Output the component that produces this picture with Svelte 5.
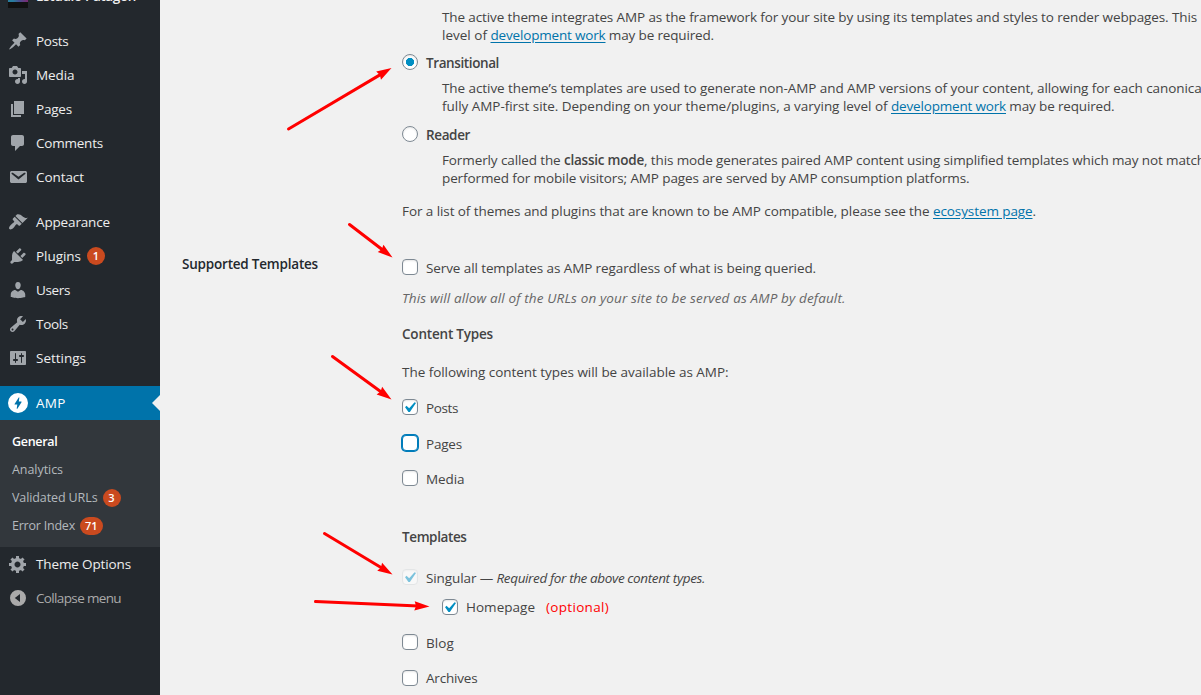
<script>
  const icons = {
    posts: 'M10.44 3.02l1.82-1.82 6.36 6.35-1.83 1.82c-1.05-.68-2.48-.57-3.41.36l-.75.75c-.92.93-1.04 2.35-.35 3.41l-1.83 1.82-2.41-2.41-2.8 2.79c-.42.42-3.38 2.71-3.8 2.29s1.86-3.39 2.28-3.81l2.79-2.79L4.1 9.36l1.83-1.82c1.05.69 2.48.57 3.4-.36l.75-.75c.93-.92 1.05-2.35.36-3.41z',
    media: 'M13 11V4c0-.55-.45-1-1-1h-1.67L9 1H5L3.67 3H2c-.55 0-1 .45-1 1v7c0 .55.45 1 1 1h10c.55 0 1-.45 1-1zM7 4.5c1.38 0 2.5 1.12 2.5 2.5S8.38 9.5 7 9.5 4.5 8.38 4.5 7 5.62 4.5 7 4.5zM14 6h5v10.5c0 1.38-1.12 2.5-2.5 2.5S14 17.88 14 16.5s1.12-2.5 2.5-2.5c.17 0 .34.02.5.05V9h-3V6zm-4 8.05V13h2v3.5c0 1.38-1.12 2.5-2.5 2.5S7 17.88 7 16.5 8.12 14 9.5 14c.17 0 .34.02.5.05z',
    pages: 'M6 15V2h10v13H6zm-1 1h8v2H3V5h2v11z',
    comments: 'M5 2h9c1.1 0 2 .9 2 2v7c0 1.1-.9 2-2 2h-2l-5 5v-5H5c-1.1 0-2-.9-2-2V4c0-1.1.9-2 2-2z',
    contact: 'M3.87 4h13.25C18.37 4 19 4.59 19 5.79v8.42c0 1.19-.63 1.79-1.88 1.79H3.87c-1.25 0-1.88-.6-1.88-1.79V5.79c0-1.2.63-1.79 1.88-1.79zm6.62 8.6l6.74-5.53c.24-.2.43-.66.13-1.07-.29-.41-.82-.42-1.17-.17l-5.7 3.86L4.8 5.83c-.35-.25-.88-.24-1.17.17-.3.41-.11.87.13 1.07z',
    appearance: 'M14.48 11.06L7.41 3.99l1.5-1.5c.5-.56 2.3-.47 3.51.32 1.21.8 1.43 1.28 2.91 2.1 1.18.64 2.45 1.26 4.45.85zm-.71.71L6.7 4.7 4.93 6.47c-.39.39-.39 1.02 0 1.41l1.06 1.06c.39.39.39 1.03 0 1.42-.6.6-1.43 1.11-2.21 1.69-.35.26-.7.53-1.01.84C1.43 14.23.4 16.08 1.4 17.07c.99 1 2.84-.03 4.18-1.36.31-.31.58-.66.85-1.02.57-.78 1.08-1.61 1.69-2.21.39-.39 1.02-.39 1.41 0l1.06 1.06c.39.39 1.02.39 1.41 0z',
    plugins: 'M13.11 4.36L9.87 7.6 8 5.73l3.24-3.24c.35-.34 1.05-.2 1.56.32.52.51.66 1.21.31 1.55zm-8 1.77l.91-1.12 9.01 9.01-1.19.84c-.71.71-2.63 1.16-3.82 1.16H6.14L4.9 17.26c-.59.59-1.54.59-2.12 0-.59-.58-.59-1.53 0-2.12l1.24-1.24v-3.88c0-1.13.4-3.19 1.09-3.89zm7.26 3.97l3.24-3.24c.34-.35 1.04-.21 1.55.31.52.51.66 1.21.31 1.55l-3.24 3.25z',
    users: 'M10 9.25c-2.27 0-2.73-3.44-2.73-3.44C7 4.02 7.82 2 9.97 2c2.16 0 2.98 2.02 2.71 3.81 0 0-.41 3.44-2.68 3.44zm0 2.57L12.72 10c2.39 0 4.52 2.33 4.52 4.53v2.49s-3.65 1.13-7.24 1.13c-3.65 0-7.24-1.13-7.24-1.13v-2.49c0-2.25 1.94-4.48 4.47-4.48z',
    tools: 'M16.68 9.77c-1.34 1.34-3.3 1.67-4.95.99l-5.41 6.52c-.99.99-2.59.99-3.58 0s-.99-2.59 0-3.57l6.52-5.42c-.68-1.65-.35-3.61.99-4.95 1.28-1.28 3.12-1.62 4.72-1.06l-2.89 2.89 2.82 2.82 2.86-2.87c.53 1.58.18 3.39-1.08 4.65zM3.81 16.21c.4.39 1.04.39 1.43 0 .4-.4.4-1.04 0-1.43-.39-.4-1.03-.4-1.43 0-.39.39-.39 1.03 0 1.43z',
    settings: 'M18 16V4c0-.55-.45-1-1-1H3c-.55 0-1 .45-1 1v12c0 .55.45 1 1 1h14c.55 0 1-.45 1-1zM8 11h1c.55 0 1 .45 1 1s-.45 1-1 1H8v1.5c0 .28-.22.5-.5.5s-.5-.22-.5-.5V13H6c-.55 0-1-.45-1-1s.45-1 1-1h1V5.5c0-.28.22-.5.5-.5s.5.22.5.5V11zm5-2h-1c-.55 0-1-.45-1-1s.45-1 1-1h1V5.5c0-.28.22-.5.5-.5s.5.22.5.5V7h1c.55 0 1 .45 1 1s-.45 1-1 1h-1v5.5c0 .28-.22.5-.5.5s-.5-.22-.5-.5V9z',
    amp: 'M10 0a10 10 0 1 0 0 20a10 10 0 0 0 0-20zM11.4 4.4L10.8 8.6H13.2Q13.8 8.6 13.5 9.2L9.4 15.8H8.7L9.3 11.6H6.9Q6.3 11.6 6.6 11L10.7 4.4z',
    options: 'M18 12h-2.18c-.17.7-.44 1.35-.81 1.93l1.54 1.54-2.1 2.1-1.54-1.54c-.58.36-1.23.63-1.91.79V19H8v-2.18c-.68-.16-1.33-.43-1.91-.79l-1.54 1.54-2.12-2.12 1.54-1.54c-.36-.58-.63-1.23-.79-1.91H1V9.03h2.17c.16-.7.44-1.35.8-1.94L2.43 5.55l2.1-2.1 1.54 1.54c.58-.37 1.24-.64 1.93-.81V2h3v2.18c.68.16 1.33.43 1.91.79l1.54-1.54 2.12 2.12-1.54 1.54c.36.59.64 1.24.8 1.94H18V12zm-8.5 1.5c1.66 0 3-1.34 3-3s-1.34-3-3-3-3 1.34-3 3 1.34 3 3 3z',
    collapse: 'M10 2a8 8 0 1 0 0 16a8 8 0 0 0 0-16zM12 6v8L6.8 10z'
  };

  const content = [
    ['posts', 'Posts', 32.5],
    ['media', 'Media', 38.5],
    ['pages', 'Pages', 36],
    ['comments', 'Comments', 67],
    ['contact', 'Contact', 48]
  ];
  const admin = [
    ['appearance', 'Appearance', 74],
    ['plugins', 'Plugins', 45, '1'],
    ['users', 'Users', 34],
    ['tools', 'Tools', 32],
    ['settings', 'Settings', 50]
  ];
  const submenu = [
    ['General', 45.5],
    ['Analytics', 51],
    ['Validated URLs', 85.5, '3'],
    ['Error Index', 63, '71']
  ];
  const arrows = [
    [288.5, 129, 391.5, 68],
    [349.5, 224.5, 392.5, 257.5],
    [332.5, 356.5, 391.5, 399.5],
    [324.5, 533.5, 392.5, 574.5],
    [315.5, 601.5, 429.5, 606.5]
  ].map(([x1, y1, x2, y2]) => ({
    x: x1,
    y: y1,
    length: Math.hypot(x2 - x1, y2 - y1),
    angle: (Math.atan2(y2 - y1, x2 - x1) * 180) / Math.PI
  }));

  // Spreads the letters of a run of text over the given width.
  function fit(node, width) {
    const natural = node.getBoundingClientRect().width;
    node.style.letterSpacing = `${(width - natural) / node.textContent.length}px`;
  }
</script>

{#snippet icon(name)}
  <svg class="icon" viewBox="0 0 20 20" aria-hidden="true"><path fill-rule="evenodd" d={icons[name]} /></svg>
{/snippet}

{#snippet item([name, label, width, count])}
  <li class="item">
    {@render icon(name)}
    <span class="run" use:fit={width}>{label}</span>
    {#if count}<span class="count">{count}</span>{/if}
  </li>
{/snippet}

{#snippet box(checked, state)}
  <span class="box {state}">
    {#if checked}
      <svg viewBox="0 0 20 20" aria-hidden="true"><path d="M14.83 4.89l1.34.94-5.81 8.38H9.02L5.78 9.67l1.34-1.25 2.57 2.4z" /></svg>
    {/if}
  </span>
{/snippet}

<div class="page">
  <nav class="sidebar">
    <div class="brand">
      <span class="logo"></span>
      <span class="run" use:fit={100}>Estudio Patagon</span>
    </div>
    <ul>{#each content as entry}{@render item(entry)}{/each}</ul>
    <ul>{#each admin as entry}{@render item(entry)}{/each}</ul>
    <ul>
      <li class="item current">{@render icon('amp')}<span class="run" use:fit={29.5}>AMP</span></li>
      <li>
        <ul class="submenu">
          {#each submenu as [label, width, count], i}
            <li class:active={i === 0}>
              <span class="run" use:fit={width}>{label}</span>
              {#if count}<span class="count">{count}</span>{/if}
            </li>
          {/each}
        </ul>
      </li>
      {@render item(['options', 'Theme Options', 95])}
      <li class="item collapse">{@render icon('collapse')}<span class="run" use:fit={85}>Collapse menu</span></li>
    </ul>
  </nav>

  <main>
    <section>
      <div class="field">
        <p class="indent">
          <span class="run" use:fit={755}>The active theme integrates AMP as the framework for your site by using its templates and styles to render webpages. This</span><br />
          <span class="run" use:fit={48.5}>{'level of '}</span><a class="run" href="#work" use:fit={115}>development work</a><span class="run" use:fit={108.5}>{' may be required.'}</span>
        </p>
        <div class="option gap-10"><span class="radio on"></span><strong class="run" use:fit={73}>Transitional</strong></div>
        <p class="indent gap-7">
          <span class="run" use:fit={763}>The active theme’s templates are used to generate non-AMP and AMP versions of your content, allowing for each canonical</span><br />
          <span class="run" use:fit={449}>{'fully AMP-first site. Depending on your theme/plugins, a varying level of '}</span><a class="run" href="#work" use:fit={115}>development work</a><span class="run" use:fit={108.5}>{' may be required.'}</span>
        </p>
        <div class="option gap-11"><span class="radio"></span><strong class="run" use:fit={44}>Reader</strong></div>
        <p class="indent gap-7">
          <span class="run" use:fit={122}>{'Formerly called the '}</span><strong class="run" use:fit={80}>classic mode</strong><span class="run" use:fit={561}>, this mode generates paired AMP content using simplified templates which may not match</span><br />
          <span class="run" use:fit={527.5}>performed for mobile visitors; AMP pages are served by AMP consumption platforms.</span>
        </p>
        <p class="gap-15">
          <span class="run" use:fit={531}>{'For a list of themes and plugins that are known to be AMP compatible, please see the '}</span><a class="run" href="#ecosystem" use:fit={99.5}>ecosystem page</a>.
        </p>
      </div>
    </section>

    <section class="templates">
      <h2><span class="run" use:fit={136}>Supported Templates</span></h2>
      <div class="field">
        <label class="option">{@render box(false, '')}<span class="run" use:fit={390}>Serve all templates as AMP regardless of what is being queried.</span></label>
        <p class="hint gap-12"><em class="run" use:fit={443.5}>This will allow all of the URLs on your site to be served as AMP by default.</em></p>
        <h3 class="gap-18"><span class="run" use:fit={91}>Content Types</span></h3>
        <p class="gap-20"><span class="run" use:fit={326.5}>The following content types will be available as AMP:</span></p>
        <label class="option gap-18">{@render box(true, '')}<span class="run" use:fit={32}>Posts</span></label>
        <label class="option gap-18">{@render box(false, 'focused')}<span class="run" use:fit={36}>Pages</span></label>
        <label class="option gap-17">{@render box(false, '')}<span class="run" use:fit={38.5}>Media</span></label>
        <h3 class="gap-40"><span class="run" use:fit={64.5}>Templates</span></h3>
        <label class="option gap-23">{@render box(true, 'disabled')}<span><span class="run" use:fit={70.5}>{'Singular — '}</span><em class="run" use:fit={208.5}>Required for the above content types.</em></span></label>
        <label class="option nested gap-12">{@render box(true, '')}<span class="run" use:fit={69}>Homepage</span><span class="run note" use:fit={63}>(optional)</span></label>
        <label class="option gap-17">{@render box(false, '')}<span class="run" use:fit={28}>Blog</span></label>
        <label class="option last gap-18">{@render box(false, '')}<span class="run" use:fit={51.5}>Archives</span></label>
      </div>
    </section>
  </main>

  <svg class="arrows" viewBox="0 0 1201 695" aria-hidden="true">
    {#each arrows as { x, y, length, angle }}
      <g transform="translate({x} {y}) rotate({angle})">
        <line x1="0" y1="0" x2={length - 11} y2="0" />
        <path d="M{length} 0l-15 -4.7l1.5 4.7l-1.5 4.7z" />
      </g>
    {/each}
  </svg>
</div>

<style>
  :global(body) {
    overflow: hidden;
  }
  .page {
    position: relative;
    display: flex;
    width: 1201px;
    height: 695px;
    overflow: hidden;
    background: #f1f1f1;
    color: #444;
    font: 13.5px/18px 'Open Sans', 'Noto Sans', sans-serif;
  }
  ul, p, h2, h3 {
    margin: 0;
    padding: 0;
    list-style: none;
    font-size: inherit;
    font-weight: inherit;
  }
  .run {
    display: inline-block;
    white-space: pre;
  }
  .sidebar {
    flex: 0 0 160px;
    background: #23282d;
    color: #eee;
  }
  .brand {
    display: flex;
    gap: 8px;
    height: 24px;
    padding-left: 8px;
    font-weight: 600;
  }
  .brand .run {
    margin-top: -13px;
  }
  .logo {
    width: 20px;
    height: 8px;
    background: linear-gradient(#0000 2px, #111 2px), linear-gradient(90deg, #287c9d 25%, #4b4a8d 60%, #7d286f);
  }
  .sidebar > ul + ul {
    margin-top: 11px;
  }
  .item {
    position: relative;
    display: flex;
    align-items: center;
    gap: 8px;
    height: 34px;
    padding-left: 8px;
  }
  .icon {
    flex: none;
    width: 20px;
    height: 20px;
    fill: #a0a5aa;
  }
  .item .count {
    margin-left: -2px;
  }
  .count {
    box-sizing: border-box;
    min-width: 18px;
    height: 18px;
    padding: 0 5px;
    border-radius: 9px;
    background: #ca4a1f;
    color: #fff;
    font-size: 11px;
    font-weight: 600;
    line-height: 18px;
    text-align: center;
  }
  .current {
    background: #0073aa;
    color: #fff;
  }
  .current .icon {
    fill: #fff;
  }
  .current::after {
    content: '';
    position: absolute;
    right: 0;
    top: 9px;
    border: 8px solid transparent;
    border-left: 0;
    border-right-color: #f1f1f1;
  }
  .submenu {
    height: 112px;
    padding: 8px 12px 7px;
    background: #32373c;
    color: #b4b9be;
    font-size: 12.5px;
  }
  .submenu li {
    display: flex;
    align-items: center;
    gap: 5px;
    height: 28px;
  }
  .submenu .active {
    color: #fff;
    font-weight: 600;
  }
  .collapse {
    color: #aaa;
  }
  .collapse .icon {
    fill: #aaa;
  }
  main {
    flex: 1;
    min-width: 0;
    padding: 8px 0 0 22px;
    white-space: nowrap;
  }
  .field {
    margin-left: 220px;
  }
  .templates {
    display: flex;
    margin-top: 39px;
  }
  .templates .field {
    margin-left: 0;
  }
  h2 {
    flex: 0 0 220px;
    margin-top: -4px;
    color: #23282d;
    font-weight: 600;
  }
  h3, strong {
    font-weight: 600;
  }
  .indent {
    padding-left: 40px;
  }
  a {
    color: #0073aa;
    text-decoration: underline;
    text-underline-offset: 2px;
  }
  .option {
    display: flex;
    align-items: flex-start;
    gap: 8px;
    height: 18px;
  }
  .nested {
    padding-left: 40px;
  }
  .nested .run,
  .last .run {
    margin-top: -1px;
  }
  .note {
    margin-left: 3px;
    color: #f00;
  }
  .hint {
    color: #666;
  }
  .radio, .box {
    box-sizing: border-box;
    flex: none;
    width: 16px;
    height: 16px;
    border: 1px solid #7e8993;
    background: #fff;
    box-shadow: inset 0 1px 2px rgba(0, 0, 0, 0.1);
  }
  .radio {
    border-radius: 50%;
  }
  .radio.on {
    background: radial-gradient(circle, #008ec2 3.8px, #fff 4.4px);
  }
  .box {
    border-radius: 4px;
  }
  .box svg {
    display: block;
    width: 21px;
    height: 21px;
    margin: -3px 0 0 -4px;
    fill: #008ec2;
  }
  .focused {
    border-color: #007cba;
    box-shadow: 0 0 0 1px #007cba;
  }
  .disabled {
    border-color: #e3e5e6;
    background: #f8f8f8;
    box-shadow: inset 0 1px 2px rgba(0, 0, 0, 0.04);
  }
  .disabled svg {
    opacity: 0.5;
  }
  .gap-7 { margin-top: 7px; }
  .gap-10 { margin-top: 10px; }
  .gap-11 { margin-top: 11px; }
  .gap-12 { margin-top: 12px; }
  .gap-15 { margin-top: 15px; }
  .gap-17 { margin-top: 17px; }
  .gap-18 { margin-top: 18px; }
  .gap-20 { margin-top: 20px; }
  .gap-23 { margin-top: 23px; }
  .gap-40 { margin-top: 40px; }
  .arrows {
    position: absolute;
    inset: 0;
    width: 1201px;
    height: 695px;
    pointer-events: none;
    fill: #f00;
  }
  .arrows line {
    stroke: #f00;
    stroke-width: 3;
    stroke-linecap: round;
  }
</style>
